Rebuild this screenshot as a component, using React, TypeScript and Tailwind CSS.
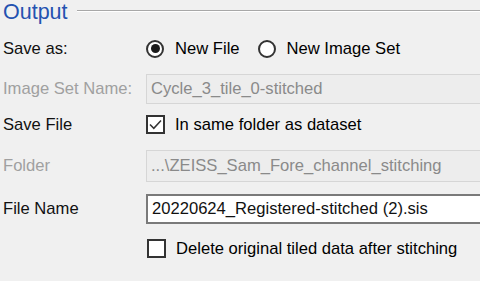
import React from "react";

const FONT = { fontFamily: '"Segoe UI", "Liberation Sans", Arial, sans-serif' };

function Radio({ checked }: { checked?: boolean }) {
  return (
    <span className="flex h-[18px] w-[18px] shrink-0 items-center justify-center rounded-full border-2 border-[#333333] bg-white">
      {checked && <span className="h-[9px] w-[9px] rounded-full bg-[#1a1a1a]" />}
    </span>
  );
}

function Check({ checked }: { checked?: boolean }) {
  return (
    <span className="flex h-[19px] w-[19px] shrink-0 items-center justify-center border-2 border-[#333333] bg-white">
      {checked && (
        <svg width="15" height="15" viewBox="0 0 15 15" fill="none">
          <path d="M2 7.5 L5.8 11.3 L13 3.5" stroke="#333333" strokeWidth="1.5" />
        </svg>
      )}
    </span>
  );
}

function Label({ children, disabled }: { children: React.ReactNode; disabled?: boolean }) {
  return (
    <div className={`w-[146px] shrink-0 pl-[3px] ${disabled ? "text-[#a0a0a0]" : "text-[#111111]"}`}>
      {children}
    </div>
  );
}

function TextBox({ value, disabled }: { value: string; disabled?: boolean }) {
  return (
    <div
      className={`flex h-full w-[360px] shrink-0 items-center pl-[4px] ${
        disabled
          ? "border border-[#d6d6d6] bg-[#ededed] text-[#8a8a8a]"
          : "border-2 border-[#7a7a7a] bg-white text-[#111111]"
      }`}
    >
      {value}
    </div>
  );
}

export default function App() {
  return (
    <div className="h-[281px] w-[480px] overflow-hidden bg-[#f0f0f0] text-[16.6px]" style={FONT}>
      <div className="flex h-[24px] items-start">
        <span className="pl-[3px] text-[21.5px] leading-[24px] text-[#2452b0]">Output</span>
        <div className="ml-[9px] mt-[10px] flex-1 border-t border-b border-t-[#a8a8a8] border-b-white" />
      </div>

      <div className="mt-[6px] flex h-[38px] items-center">
        <Label>Save as:</Label>
        <div className="flex items-center gap-[11px]">
          <Radio checked />
          <span>New File</span>
        </div>
        <div className="ml-[18px] flex items-center gap-[11px]">
          <Radio />
          <span>New Image Set</span>
        </div>
      </div>

      <div className="mt-[6px] flex h-[30px] items-center">
        <Label disabled>Image Set Name:</Label>
        <TextBox value="Cycle_3_tile_0-stitched" disabled />
      </div>

      <div className="mt-[4px] flex h-[34px] items-center">
        <Label>Save File</Label>
        <div className="flex items-center gap-[10px]">
          <Check checked />
          <span>In same folder as dataset</span>
        </div>
      </div>

      <div className="mt-[8px] flex h-[32px] items-center">
        <Label disabled>Folder</Label>
        <TextBox value="...\ZEISS_Sam_Fore_channel_stitching" disabled />
      </div>

      <div className="mt-[12px] flex h-[30px] items-center">
        <Label>File Name</Label>
        <TextBox value="20220624_Registered-stitched (2).sis" />
      </div>

      <div className="mt-[8px] flex h-[34px] items-center">
        <div className="w-[147px] shrink-0" />
        <div className="flex items-center gap-[10px]">
          <Check />
          <span>Delete original tiled data after stitching</span>
        </div>
      </div>
    </div>
  );
}
